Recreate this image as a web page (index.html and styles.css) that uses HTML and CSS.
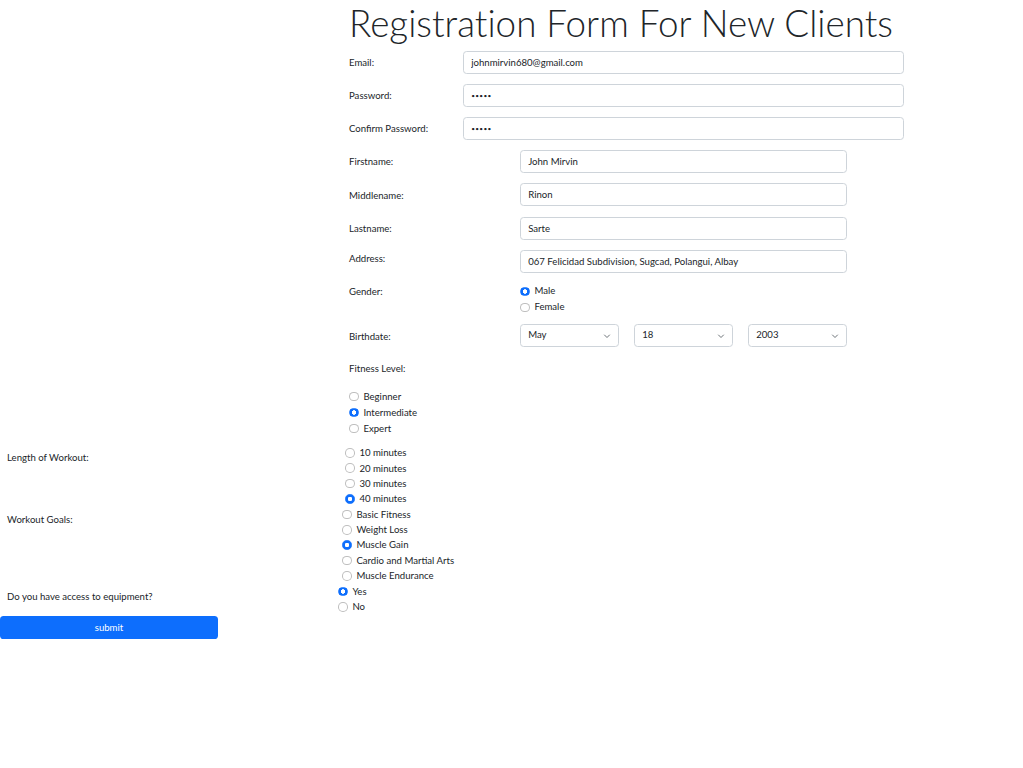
FILE: index.html
```html
<!DOCTYPE html>
<html lang="en">
<head>
<meta charset="utf-8">
<title>Registration Form For New Clients</title>
<link rel="stylesheet" href="styles.css">
</head>
<body>
<form class="form">
  <section class="upper">
    <h1 class="title">Registration Form For New Clients</h1>
    <div class="account">
      <label class="lbl" for="email">Email:</label>
      <input class="field" id="email" type="email" value="johnmirvin680@gmail.com">
      <label class="lbl" for="pw">Password:</label>
      <input class="field pw" id="pw" type="password" value="12345">
      <label class="lbl" for="cpw">Confirm Password:</label>
      <input class="field pw" id="cpw" type="password" value="12345">
    </div>
    <div class="personal">
      <label class="lbl" for="fn">Firstname:</label>
      <input class="field" id="fn" type="text" value="John Mirvin">
      <label class="lbl" for="mn">Middlename:</label>
      <input class="field" id="mn" type="text" value="Rinon">
      <label class="lbl" for="ln">Lastname:</label>
      <input class="field" id="ln" type="text" value="Sarte">
      <label class="lbl top" for="ad">Address:</label>
      <input class="field" id="ad" type="text" value="067 Felicidad Subdivision, Sugcad, Polangui, Albay">
      <span class="lbl top">Gender:</span>
      <div class="radios">
        <label class="opt"><input class="radio" type="radio" name="gender" checked>Male</label>
        <label class="opt"><input class="radio" type="radio" name="gender">Female</label>
      </div>
      <span class="lbl">Birthdate:</span>
      <div class="dates">
        <span class="sel-wrap">
          <select class="sel"><option>January</option><option>February</option><option>March</option><option>April</option><option selected>May</option><option>June</option></select>
          <svg class="chev" viewBox="0 0 16 16"><path d="m3 6 5 5 5-5" fill="none" stroke="#495057" stroke-width="1.6" stroke-linecap="round" stroke-linejoin="round"/></svg>
        </span>
        <span class="sel-wrap">
          <select class="sel"><option>16</option><option>17</option><option selected>18</option><option>19</option></select>
          <svg class="chev" viewBox="0 0 16 16"><path d="m3 6 5 5 5-5" fill="none" stroke="#495057" stroke-width="1.6" stroke-linecap="round" stroke-linejoin="round"/></svg>
        </span>
        <span class="sel-wrap">
          <select class="sel"><option>2001</option><option>2002</option><option selected>2003</option><option>2004</option></select>
          <svg class="chev" viewBox="0 0 16 16"><path d="m3 6 5 5 5-5" fill="none" stroke="#495057" stroke-width="1.6" stroke-linecap="round" stroke-linejoin="round"/></svg>
        </span>
      </div>
    </div>
    <div class="fitness">
      <p class="lbl fit-title">Fitness Level:</p>
      <div class="radios">
        <label class="opt"><input class="radio" type="radio" name="level">Beginner</label>
        <label class="opt"><input class="radio" type="radio" name="level" checked>Intermediate</label>
        <label class="opt"><input class="radio" type="radio" name="level">Expert</label>
      </div>
    </div>
  </section>
  <section class="lower">
    <div class="grp">
      <span class="glbl">Length of Workout:</span>
      <div class="radios tight in-7">
        <label class="opt"><input class="radio" type="radio" name="len">10 minutes</label>
        <label class="opt"><input class="radio" type="radio" name="len">20 minutes</label>
        <label class="opt"><input class="radio" type="radio" name="len">30 minutes</label>
        <label class="opt"><input class="radio" type="radio" name="len" checked>40 minutes</label>
      </div>
    </div>
    <div class="grp">
      <span class="glbl">Workout Goals:</span>
      <div class="radios tight in-4">
        <label class="opt"><input class="radio" type="radio" name="goal">Basic Fitness</label>
        <label class="opt"><input class="radio" type="radio" name="goal">Weight Loss</label>
        <label class="opt"><input class="radio" type="radio" name="goal" checked>Muscle Gain</label>
        <label class="opt"><input class="radio" type="radio" name="goal">Cardio and Martial Arts</label>
        <label class="opt"><input class="radio" type="radio" name="goal">Muscle Endurance</label>
      </div>
    </div>
    <div class="grp">
      <span class="glbl">Do you have access to equipment?</span>
      <div class="radios tight">
        <label class="opt"><input class="radio" type="radio" name="equip" checked>Yes</label>
        <label class="opt"><input class="radio" type="radio" name="equip">No</label>
      </div>
    </div>
    <button class="submit" type="button">submit</button>
  </section>
</form>
</body>
</html>
```
FILE: styles.css
```css
html {
  font-size: 9.6px;
}

body {
  margin: 0;
  background: #fff;
  color: #212529;
  font-family: Lato, "Open Sans", sans-serif;
  font-size: 9.6px;
  line-height: 1.5;
}

.upper {
  margin-left: 349px;
  width: 555px;
}

.title {
  margin: 0;
  font-size: 36.8px;
  font-weight: 300;
  line-height: 47px;
  white-space: nowrap;
  font-variant-ligatures: none;
}

.lbl {
  margin: 0;
  padding-top: 2px;
  line-height: 14.4px;
}

.top {
  align-self: start;
}

.account {
  display: grid;
  grid-template-columns: 114px 1fr;
  row-gap: 10px;
  align-items: center;
  margin-top: 4px;
}

.personal {
  display: grid;
  grid-template-columns: 171px 327px;
  row-gap: 10.33px;
  align-items: center;
  margin-top: 10px;
}

.field,
.sel {
  box-sizing: border-box;
  width: 100%;
  height: 23px;
  margin: 0;
  padding: 0 7.2px;
  border: 1px solid #ced4da;
  border-radius: 3.6px;
  background: #fff;
  color: #212529;
  font: inherit;
  outline: none;
}

.pw {
  font-size: 6.5px;
  letter-spacing: 0.3px;
}

.sel {
  appearance: none;
  -webkit-appearance: none;
  padding-right: 20px;
}

.dates {
  display: flex;
  gap: 15px;
  margin-top: -2px;
}

.sel-wrap {
  position: relative;
  display: block;
  width: 99px;
}

.chev {
  position: absolute;
  right: 8px;
  top: 8px;
  width: 8px;
  height: 8px;
  pointer-events: none;
}

.radios {
  display: flex;
  flex-direction: column;
}

.opt {
  display: flex;
  align-items: center;
  gap: 4.8px;
  height: 16px;
  line-height: 16px;
}

.radio {
  appearance: none;
  -webkit-appearance: none;
  flex: none;
  box-sizing: border-box;
  width: 9.6px;
  height: 9.6px;
  margin: 0;
  border: 1px solid rgba(0, 0, 0, 0.25);
  border-radius: 50%;
  background: #fff;
}

.radio:checked {
  border-color: #0d6efd;
  background: radial-gradient(circle, #fff 0 2px, #0d6efd 2.4px);
}

.fit-title {
  margin-top: 13px;
}

.fitness .radios {
  margin-top: 12.6px;
}

.lower {
  margin-top: 8.5px;
}

.grp {
  display: flex;
  align-items: flex-start;
}

.glbl {
  box-sizing: border-box;
  width: 338px;
  padding: 5px 0 0 7px;
  line-height: 15.4px;
}

.tight .opt {
  height: 15.4px;
  line-height: 15.4px;
}

.in-7 {
  padding-left: 7px;
}

.in-4 {
  padding-left: 4px;
}

.submit {
  display: block;
  width: 218px;
  height: 23px;
  margin: 2px 0 0;
  padding: 0;
  border: none;
  border-radius: 3.6px;
  background: #0d6efd;
  color: #fff;
  font: inherit;
  text-align: center;
  cursor: pointer;
}
```
